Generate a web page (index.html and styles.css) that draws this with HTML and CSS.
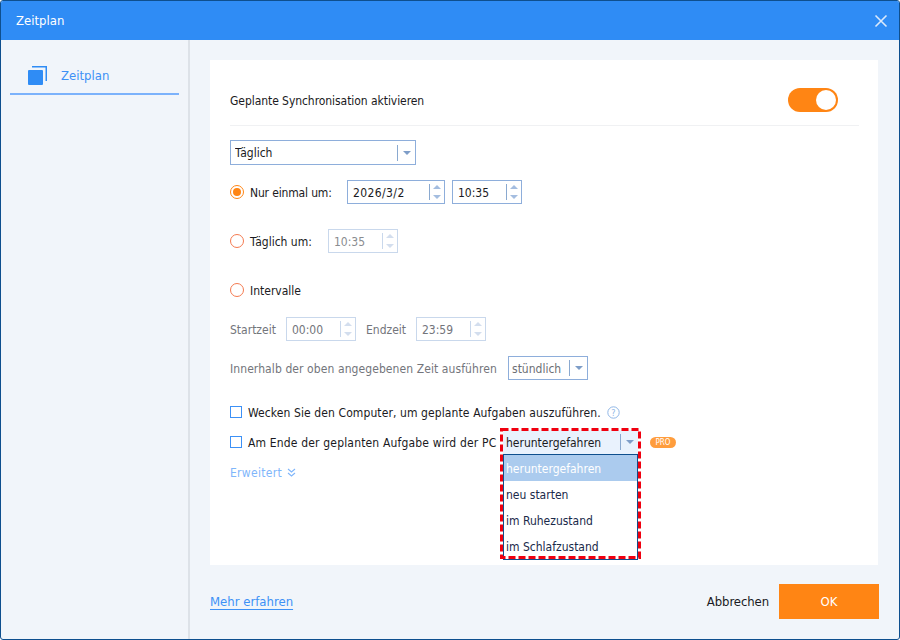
FILE: index.html
```
<!DOCTYPE html>
<html lang="de">
<head>
<meta charset="utf-8">
<title>Zeitplan</title>
<link rel="stylesheet" href="styles.css">
</head>
<body>
<div class="window">
  <header class="titlebar">
    <span class="title">Zeitplan</span>
    <svg class="close" width="14" height="14" viewBox="0 0 14 14"><path d="M1.5 1.5l11 11M12.5 1.5l-11 11" stroke="#dbe9fb" stroke-width="1.6" fill="none"/></svg>
  </header>
  <div class="body">
    <aside class="sidebar">
      <div class="tab">
        <svg class="tab-icon" width="19" height="19" viewBox="0 0 19 19"><rect x="0" y="4" width="15" height="15" rx="1" fill="#2f8cf5"/><path d="M4 .75h14.25V15" stroke="#2f8cf5" stroke-width="1.5" fill="none"/></svg>
        <span>Zeitplan</span>
      </div>
    </aside>
    <main class="main">
      <section class="card">
        <div class="row-head">
          <span class="txt t-head">Geplante Synchronisation aktivieren</span>
          <span class="toggle"><span class="knob"></span></span>
        </div>
        <div class="select sel-freq"><span class="val v-freq">Täglich</span><span class="sep"></span><span class="caret"></span></div>
        <div class="row r-once">
          <span class="radio on"></span><span class="lab w-once">Nur einmal um:</span>
          <div class="spin w-date"><span class="val v-date">2026/3/2</span><span class="sep"></span><span class="arrows"><i class="up"></i><i class="down"></i></span></div>
          <div class="spin w-time"><span class="val">10:35</span><span class="sep"></span><span class="arrows"><i class="up"></i><i class="down"></i></span></div>
        </div>
        <div class="row r-daily">
          <span class="radio"></span><span class="lab w-daily">Täglich um:</span>
          <div class="spin off w-time"><span class="val">10:35</span><span class="sep"></span><span class="arrows"><i class="up"></i><i class="down"></i></span></div>
        </div>
        <div class="row r-int"><span class="radio"></span><span class="lab">Intervalle</span></div>
        <div class="row r-range muted">
          <span class="txt w-start">Startzeit</span>
          <div class="spin off w-time"><span class="val">00:00</span><span class="sep"></span><span class="arrows"><i class="up"></i><i class="down"></i></span></div>
          <span class="txt w-end">Endzeit</span>
          <div class="spin off w-time"><span class="val">23:59</span><span class="sep"></span><span class="arrows"><i class="up"></i><i class="down"></i></span></div>
        </div>
        <div class="row r-within muted">
          <span class="txt w-within">Innerhalb der oben angegebenen Zeit ausführen</span>
          <div class="select sel-hour"><span class="val">stündlich</span><span class="sep"></span><span class="caret"></span></div>
        </div>
        <div class="row r-wake">
          <span class="check"></span><span class="txt t-wake">Wecken Sie den Computer, um geplante Aufgaben auszuführen.</span>
          <svg class="help" width="13" height="13" viewBox="0 0 13 13"><circle cx="6.5" cy="6.5" r="5.7" fill="none" stroke="#8fb6e6" stroke-width="1"/><text x="6.5" y="9.6" text-anchor="middle" class="help-q">?</text></svg>
        </div>
        <div class="row r-end">
          <span class="check"></span><span class="txt w-endlab">Am Ende der geplanten Aufgabe wird der PC</span>
          <div class="drop">
            <div class="drop-head"><span class="val">heruntergefahren</span><span class="sep"></span><span class="caret"></span></div>
            <ul class="drop-list">
              <li class="sel">heruntergefahren</li>
              <li>neu starten</li>
              <li>im Ruhezustand</li>
              <li>im Schlafzustand</li>
            </ul>
            <svg class="mark" width="141" height="131" viewBox="0 0 141 131"><rect x="1.5" y="1.5" width="138" height="128" fill="none" stroke="#f0000f" stroke-width="3" stroke-dasharray="7 3"/></svg>
          </div>
          <span class="pro">PRO</span>
        </div>
        <div class="more">
          <span class="txt t-more">Erweitert</span>
          <svg width="9" height="9" viewBox="0 0 9 9"><path d="M1 1l3.5 3 3.5-3M1 5l3.5 3 3.5-3" stroke="#7fb6fb" stroke-width="1.1" fill="none"/></svg>
        </div>
      </section>
      <footer class="footer">
        <a class="learn" href="#">Mehr erfahren</a>
        <span class="cancel">Abbrechen</span>
        <button class="ok" type="button">OK</button>
      </footer>
    </main>
  </div>
</div>
</body>
</html>
```
FILE: styles.css
```
* { box-sizing: border-box; }
html, body { margin: 0; padding: 0; }
body {
  width: 900px; height: 640px; background: #fff;
  font-family: "DejaVu Sans Condensed", "DejaVu Sans", sans-serif;
  font-stretch: condensed;
  font-size: 12px; color: #1a1a22;
}
.window {
  width: 900px; height: 640px;
  border: 1px solid #0e4f8e;
  border-radius: 3px;
  display: flex; flex-direction: column;
  background: #f1f5fa; overflow: hidden;
}
.titlebar {
  height: 39px; flex: none; background: #2f8cf5; color: #fff;
  display: flex; align-items: center; justify-content: space-between;
  padding: 0 11px 0 15px; font-size: 13px;
}
.body { flex: 1; display: flex; min-height: 0; }
.sidebar { width: 189px; flex: none; border-right: 2px solid #dde2e8; padding: 0 9px; }
.tab {
  height: 55px; border-bottom: 2px solid #7cb2fb;
  display: flex; align-items: center; gap: 14px;
  padding-left: 18px; padding-top: 18px;
  font-size: 13px; color: #3d91f6;
}
.main { flex: 1; padding: 20px 21px 0 20px; display: flex; flex-direction: column; min-width: 0; }
.card { background: #fff; height: 505px; padding: 0 19px 0 20px; flex: none; }
.row-head {
  height: 66px; border-bottom: 1px solid #f0f1f3;
  display: flex; align-items: center; justify-content: space-between;
  padding: 15px 21px 0 0;
}
.txt, .lab, .val { padding-top: 2px; line-height: 16px; }
.t-head { letter-spacing: -.06px; }
.t-wake { letter-spacing: .1px; }
.t-more { letter-spacing: .3px; }
.toggle {
  width: 50px; height: 24px; border-radius: 12px; background: #ff8514;
  display: flex; justify-content: flex-end; align-items: center; padding-right: 2px;
}
.knob { width: 20px; height: 20px; border-radius: 50%; background: #fff; }
.val { flex: 1; white-space: nowrap; overflow: hidden; }
.v-date { letter-spacing: .4px; }
.v-freq { padding-top: 0; }
.sep { width: 1px; height: 16px; background: #8aa9d0; flex: none; }
.caret {
  width: 0; height: 0; margin: 0 4px 0 5px; flex: none;
  border-left: 4px solid transparent; border-right: 4px solid transparent; border-top: 4px solid #7e9dc8;
}
.select {
  display: flex; align-items: center; height: 25px;
  border: 1px solid #8eaedb; background: #fff; padding-left: 4px;
}
.sel-freq { width: 186px; margin-top: 14px; }
.sel-hour { width: 80px; height: 24px; padding-left: 3px; margin-left: 10px; color: #6d6f75; }
.row { display: flex; align-items: center; height: 24px; }
.r-once { margin-top: 15px; }
.r-daily { margin-top: 25px; }
.r-int { margin-top: 25px; }
.r-range { margin-top: 15px; }
.r-within { margin-top: 15px; }
.r-wake { margin-top: 20px; }
.r-end { margin-top: 6px; position: relative; }
.muted { color: #73757b; }
.radio {
  width: 14px; height: 14px; flex: none; border-radius: 50%;
  border: 1px solid #f47a50; margin-right: 6px; background: #fff;
}
.radio.on { border-color: #ff8514; padding: 2px; background: #ff8514 content-box; }
.lab { white-space: nowrap; }
.w-once { width: 97px; letter-spacing: -.15px; }
.w-daily { width: 78px; }
.spin {
  display: flex; align-items: center; height: 24px;
  border: 1px solid #8eaedb; background: #fff; padding-left: 5px;
}
.w-date { width: 98px; margin-right: 7px; }
.w-time { width: 70px; }
.spin.off { border-color: #c9d8ec; color: #73757b; }
.r-daily .spin.off { color: #8a8c90; }
.arrows { width: 14px; flex: none; display: flex; flex-direction: column; align-items: center; gap: 6px; }
.arrows i { display: block; width: 0; height: 0; border-left: 4px solid transparent; border-right: 4px solid transparent; }
.arrows .up { border-bottom: 4px solid #a4bde0; }
.arrows .down { border-top: 4px solid #a4bde0; }
.spin.off .arrows .up { border-bottom-color: #d3deee; }
.spin.off .arrows .down { border-top-color: #d3deee; }
.spin.off .sep { background: #c9d8ec; }
.w-start { width: 56px; }
.w-end { width: 60px; padding-left: 10px; }
.w-within { width: 268px; white-space: nowrap; letter-spacing: .09px; }
.check { width: 12px; height: 12px; flex: none; border: 1px solid #3d91f6; margin-right: 6px; background: #fff; }
.help { margin-left: 6px; flex: none; }
.help-q { font-size: 9px; fill: #8fb6e6; }
.w-endlab { width: 255px; white-space: nowrap; letter-spacing: .17px; }
.drop { width: 135px; height: 24px; position: relative; flex: none; }
.drop-head {
  display: flex; align-items: center; height: 24px;
  background: #e9f2fd; padding-left: 3px;
}
.drop-list {
  list-style: none; margin: 0; padding: 0; position: absolute; left: 0; top: 24px; width: 135px;
  background: #fff; border: 1px solid #0e4f8e; z-index: 2;
}
.drop-list li { height: 26px; line-height: 28px; padding-left: 2px; color: #1a2a4a; }
.drop-list li.sel { background: #abcbee; color: #fff; }
.mark { position: absolute; left: -3px; top: -2px; z-index: 3; pointer-events: none; }
.pro {
  margin-left: 12px; width: 26px; height: 11px; border-radius: 6px;
  background: #ff9d3d; color: #fff; font-size: 8px; line-height: 11px; text-align: center;
}
.more { display: flex; align-items: center; gap: 5px; height: 20px; margin-top: 8px; color: #7fb6fb; }
.footer { flex: 1; display: flex; align-items: center; padding-bottom: 1px; margin-right: -1px; }
.learn { color: #3d91f6; text-decoration: underline; text-underline-offset: 3px; font-size: 13px; margin-right: auto; }
.cancel { font-size: 13px; margin-right: 10px; letter-spacing: -.1px; }
.ok {
  width: 100px; height: 35px; border: 0; background: #ff8514; color: #fff;
  font: inherit; font-size: 13px;
}
```
